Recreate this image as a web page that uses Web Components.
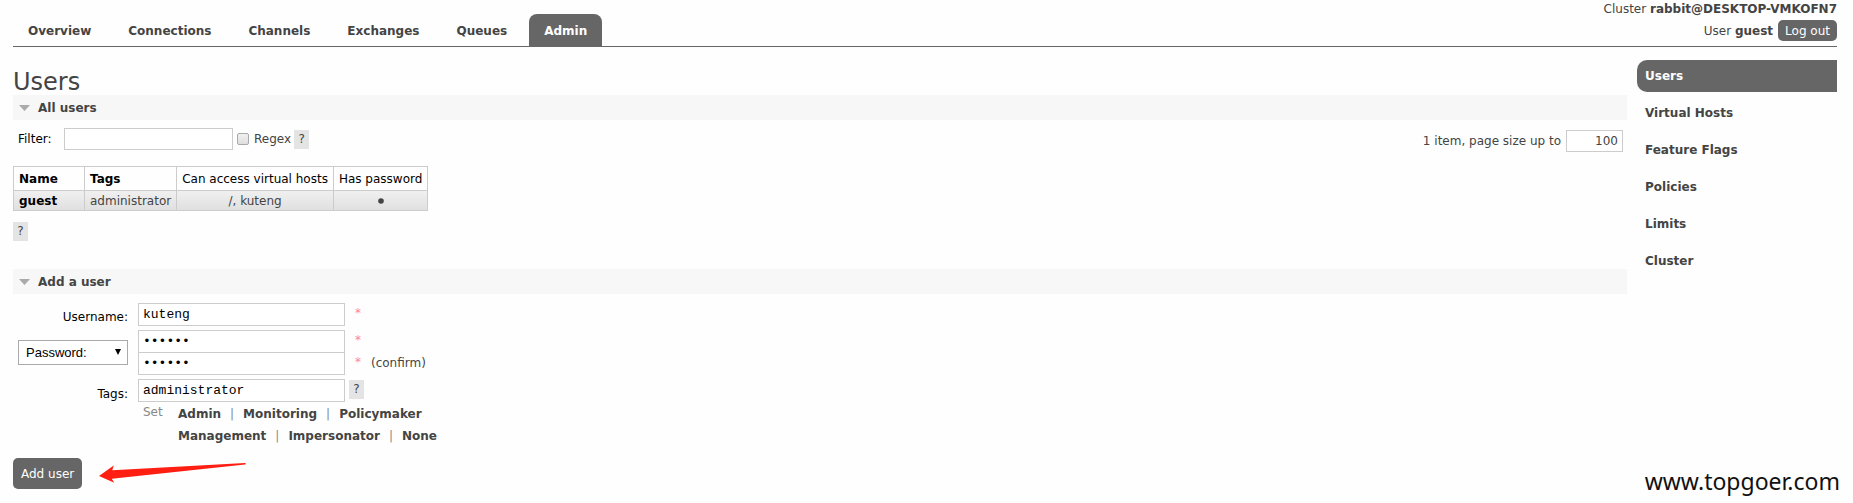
<!DOCTYPE html>
<html lang="en">
<head>
<meta charset="utf-8">
<title>RabbitMQ Management</title>
<style>
  body { margin: 0; background: #fefefe; color: #444; font: 12px/16px "DejaVu Sans", Verdana, sans-serif; }
</style>
</head>
<body>
<management-app></management-app>

<template id="t-app">
  <style>
    :host { display: block; position: relative; padding: 0 16px 12px 13px; }
    .columns { display: grid; grid-template-columns: minmax(0, 1fr) 200px; column-gap: 10px; margin-top: 13px; }
    h1 { margin: 0; padding-top: 9px; font-size: 24px; line-height: 26px; font-weight: 400; }
    .watermark { position: absolute; right: 13px; bottom: 4px; color: #111; font: 23px/32px "Noto Sans", sans-serif; }
  </style>
  <app-header></app-header>
  <div class="columns">
    <main>
      <h1>Users</h1>
      <page-section heading="All users"><user-list></user-list></page-section>
      <page-section heading="Add a user"><add-user></add-user></page-section>
    </main>
    <side-menu></side-menu>
  </div>
  <div class="watermark">www.topgoer.com</div>
</template>

<template id="t-header">
  <style>
    :host { display: flex; justify-content: space-between; height: 46px; border-bottom: 1px solid #666; }
    nav { display: flex; align-items: flex-end; gap: 7px; }
    nav a { padding: 9px 15px 7px; border-radius: 8px 8px 0 0; color: #444; font-weight: 700; text-decoration: none; }
    nav a.active { background: #666; color: #fff; }
    .session { padding-top: 1px; text-align: right; }
    .user { display: flex; align-items: center; justify-content: flex-end; gap: 5px; margin-top: 3px; }
    button { height: 21px; padding: 0 7px; border: 0; border-radius: 5px; background: #666; color: #fff; font: inherit; }
  </style>
  <nav>
    <a href="#/">Overview</a><a href="#/connections">Connections</a><a href="#/channels">Channels</a><a href="#/exchanges">Exchanges</a><a href="#/queues">Queues</a><a href="#/users" class="active">Admin</a>
  </nav>
  <div class="session">
    <div>Cluster <b>rabbit@DESKTOP-VMKOFN7</b></div>
    <div class="user"><span>User <b>guest</b></span><button type="button">Log out</button></div>
  </div>
</template>

<template id="t-side">
  <style>
    :host { display: flex; flex-direction: column; gap: 5px; }
    a { padding: 8px; border-radius: 10px 0 0 10px; color: #444; font-weight: 700; text-decoration: none; }
    a.active { background: #666; color: #fff; }
  </style>
  <a href="#/users" class="active">Users</a>
  <a href="#/vhosts">Virtual Hosts</a>
  <a href="#/feature-flags">Feature Flags</a>
  <a href="#/policies">Policies</a>
  <a href="#/limits">Limits</a>
  <a href="#/cluster-name">Cluster</a>
</template>

<template id="t-section">
  <style>
    :host { display: block; }
    h2 { display: flex; align-items: center; gap: 8px; height: 25px; margin: 0; padding: 0 6px; background: #f7f7f7; font-size: 12px; line-height: 16px; }
    svg { width: 11px; height: 6px; fill: #aaa; }
  </style>
  <h2><svg viewBox="0 0 11 6"><path d="M0 0H11L5.5 6Z"/></svg><span></span></h2>
  <slot></slot>
</template>

<template id="t-help">
  <style>
    :host { display: inline-block; }
    a { display: block; width: 15px; line-height: 19px; background: #e4e4e4; color: #444; text-align: center; text-decoration: none; }
  </style>
  <a href="#help">?</a>
</template>

<template id="t-list">
  <style>
    :host { display: block; padding-bottom: 28px; }
    .bar { display: flex; justify-content: space-between; padding: 8px 4px 0 5px; }
    .filter { display: flex; align-items: center; height: 22px; }
    .filter > label:first-child { width: 46px; color: #000; }
    input[type=text] { box-sizing: border-box; height: 22px; padding: 2px 4px; border: 1px solid #ccc; background: #fff; color: #000; font: inherit; }
    #filter { width: 169px; }
    input[type=checkbox] { appearance: none; box-sizing: border-box; width: 12px; height: 12px; margin: 0 5px 0 4px; border: 1px solid #aaa; border-radius: 2px; background: linear-gradient(#f0f0f0, #dedede); }
    .filter help-link { margin-left: 3px; }
    .paging { display: flex; align-items: center; gap: 5px; margin-top: 2px; height: 22px; }
    #size { width: 57px; text-align: right; color: #444; }
    table { margin: 14px 0 11px; border-collapse: collapse; }
    th, td { padding: 1px 5px; border: 1px solid #ccc; text-align: center; }
    th { height: 21px; color: #000; font-weight: 400; }
    td { height: 17px; }
    .sort { font-weight: 700; }
    tr > :nth-child(-n+2) { text-align: left; }
    tr > :first-child { width: 60px; }
    td:first-child { color: #000; font-weight: 700; }
    tbody tr { background: linear-gradient(#f0f0f0, #dfdfdf); }
    .dot { width: 6px; height: 6px; fill: #444; vertical-align: middle; }
  </style>
  <div class="bar">
    <div class="filter">
      <label for="filter">Filter:</label><input type="text" id="filter">
      <input type="checkbox" id="regex"><label for="regex">Regex</label>
      <help-link></help-link>
    </div>
    <div class="paging"><label for="size">1 item, page size up to</label><input type="text" id="size" value="100"></div>
  </div>
  <table>
    <thead><tr><th class="sort">Name</th><th class="sort">Tags</th><th>Can access virtual hosts</th><th>Has password</th></tr></thead>
    <tbody><tr><td>guest</td><td>administrator</td><td>/, kuteng</td><td><svg class="dot" viewBox="0 0 6 6" role="img" aria-label="yes"><circle cx="3" cy="3" r="2.8"/></svg></td></tr></tbody>
  </table>
  <help-link></help-link>
</template>

<template id="t-add">
  <style>
    :host { display: block; padding-top: 9px; }
    .form { display: grid; grid-template-columns: 110px auto; column-gap: 10px; row-gap: 4px; justify-content: start; padding-left: 5px; }
    .name { align-self: end; justify-self: end; color: #000; line-height: 18px; }
    .field { display: flex; align-items: flex-start; }
    .field.tag-list { padding-bottom: 1px; }
    input { box-sizing: border-box; width: 207px; height: 23px; padding: 0 4px; border: 1px solid #ccc; background: #fff; color: #000; font: 13px/16px "Liberation Mono", "Courier New", monospace; }
    .field + .field { margin-top: -1px; }
    .mand { margin-left: 10px; color: #f88; line-height: 20px; }
    .mand + span { margin-left: 10px; line-height: 22px; }
    help-link { margin: 1px 0 0 4px; }
    .pick { position: relative; align-self: center; height: 25px; }
    select { appearance: none; box-sizing: border-box; width: 110px; height: 25px; padding: 0 7px; border: 1px solid #aaa; border-radius: 0; background: #fff; color: #000; font: 13px/16px "Liberation Sans", Arial, sans-serif; }
    .pick svg { position: absolute; right: 7px; top: 9px; width: 6px; height: 6px; pointer-events: none; }
    .tags { display: grid; grid-template-columns: 35px auto; padding-left: 5px; line-height: 22px; }
    .tags > span { color: #888; line-height: 18px; }
    .tags a { color: #444; font-weight: 700; text-decoration: none; }
    .tags i { margin: 0 9px; color: #888; font-style: normal; }
    .actions { display: flex; align-items: center; gap: 17px; margin-top: 11px; }
    button { height: 31px; padding: 0 8px; border: 0; border-radius: 5px; background: #666; color: #fff; font: inherit; }
    .actions svg { width: 147px; height: 21px; fill: #ff1f12; }
  </style>
  <form>
    <div class="form">
      <label class="name" for="username">Username:</label>
      <div class="field"><input id="username" value="kuteng"><span class="mand">*</span></div>
      <div class="pick"><select aria-label="Password type"><option>Password:</option></select><svg viewBox="0 0 6 6"><path d="M0 0H6L3 6Z"/></svg></div>
      <div>
        <div class="field"><input type="password" aria-label="Password" value="kuteng"><span class="mand">*</span></div>
        <div class="field"><input type="password" aria-label="Confirm password" value="kuteng"><span class="mand">*</span><span>(confirm)</span></div>
      </div>
      <label class="name" for="tags">Tags:</label>
      <div class="field tag-list"><input id="tags" value="administrator"><help-link></help-link></div>
    </div>
    <div class="form">
      <span></span>
      <div class="tags">
        <span>Set</span>
        <div>
          <div><a href="#admin">Admin</a><i>|</i><a href="#monitoring">Monitoring</a><i>|</i><a href="#policymaker">Policymaker</a></div>
          <div><a href="#management">Management</a><i>|</i><a href="#impersonator">Impersonator</a><i>|</i><a href="#none">None</a></div>
        </div>
      </div>
    </div>
    <div class="actions">
      <button type="button">Add user</button>
      <svg viewBox="0 0 147 21"><path d="M0 13L14.7 2.5L13.3 7.2L146 0Q148 1 146 1.6L12.8 15.8L15.3 19.8Z"/></svg>
    </div>
  </form>
</template>

<script>
  const define = (name, templateId, setup) => customElements.define(name, class extends HTMLElement {
    constructor() {
      super();
      const root = this.attachShadow({ mode: 'open' });
      root.append(document.getElementById(templateId).content.cloneNode(true));
    }
    connectedCallback() { if (setup) setup(this); }
  });
  define('help-link', 't-help');
  define('app-header', 't-header');
  define('side-menu', 't-side');
  define('page-section', 't-section', el => {
    el.shadowRoot.querySelector('h2 span').textContent = el.getAttribute('heading');
  });
  define('user-list', 't-list');
  define('add-user', 't-add');
  define('management-app', 't-app');
</script>
</body>
</html>
